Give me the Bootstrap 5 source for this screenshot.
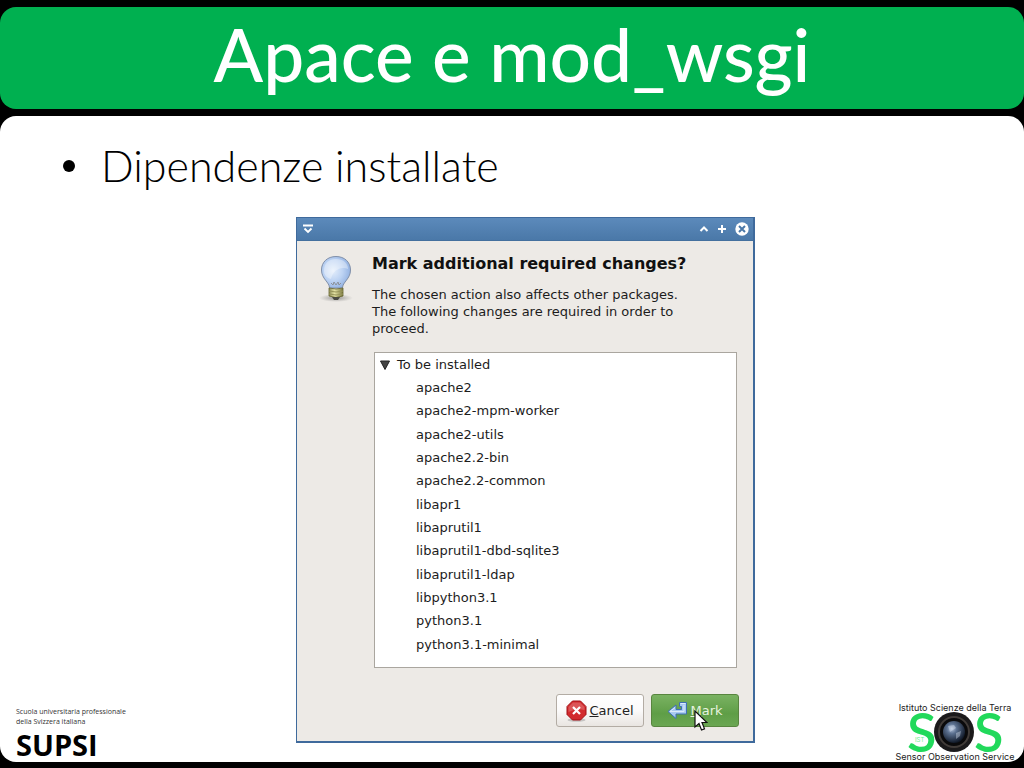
<!DOCTYPE html>
<html lang="it">
<head>
<meta charset="utf-8">
<meta name="viewport" content="width=device-width, initial-scale=1">
<title>Apace e mod_wsgi</title>
<link rel="stylesheet" href="https://cdn.jsdelivr.net/npm/bootstrap@5.3.0/dist/css/bootstrap.min.css">
<style>
  body { background: #000; color: #000; font-family: "Liberation Sans", sans-serif; }
  .slide-title { background: #00b050; border-radius: 16px; margin-top: 7px; height: 102px; }
  .slide-title h1 { color: #fff; font: 500 73px/95px Lato, sans-serif; }
  .slide-body { background: #fff; border-radius: 16px; margin: 7px 0 6px; }
  .points { padding: 21px 60px 0; height: 101px; }
  .points li { font: 300 43px/58px Lato, sans-serif; gap: 26px; }
  .dot { width: 12px; height: 12px; border-radius: 50%; background: #000; margin-left: 3px; }
  .side { flex: 1 1 0; }
  .side-left { padding: 0 0 0 16px; font-family: "Open Sans", sans-serif; }
  .school { font-size: 7px; line-height: 10px; color: #333; }
  .supsi { font-size: 29px; line-height: 35px; font-weight: 700; }
  .side-right { padding-right: 8px; }

  .dialog { width: 459px; margin: 0 0 19px 19px; border: 1px solid #3f6a9c; border-right-width: 2px; border-bottom-width: 2px; background: #edeae6; font: 13px/17px "DejaVu Sans", sans-serif; color: #1c1c1c; }
  .titlebar { height: 23px; background: linear-gradient(#5c8abb, #4a78a8); padding: 0 4px 0 5px; border-bottom: 1px solid #44709e; }
  .titlebar button { border: 0; background: none; padding: 0; line-height: 0; }
  .dialog-main { padding: 14px 16px 0 19px; gap: 16px; }
  .bulb { width: 40px; flex: none; }
  .dialog h2 { font: bold 16px/18px "DejaVu Sans", sans-serif; margin: 0 0 13px; color: #111; }
  .dialog p { margin: 0 0 15px; }
  .tree { background: #fff; border: 1px solid #aaa69f; height: 316px; margin-left: 2px; }
  .tree summary { line-height: 23px; gap: 7px; padding-left: 5px; list-style: none; }
  .tree ul { height: 280px; padding-left: 41px; }
  .actions { padding: 26px 14px 14px; gap: 7px; }
  .act { width: 88px; height: 33px; border-radius: 3px; padding: 0; font: inherit; border: 1px solid #b3aca4; color: #222; background: linear-gradient(#fff, #fbfafa 50%, #e9e5e1); }
  .act-mark { color: #e6f2df; border-color: #58853f; background: linear-gradient(#7ab262, #5f9e47 60%, #6aa652); }
  .act svg { flex: none; }
  .act { gap: 2px; }
  .pointer { left: 42px; top: 15px; }
  .sos { overflow: visible; }
</style>
</head>
<body class="min-vh-100 d-flex flex-column">
<header class="slide-title d-flex justify-content-center">
  <h1 class="m-0 text-nowrap">Apace e mod_wsgi</h1>
</header>
<main class="slide-body flex-grow-1 d-flex flex-column">
  <ul class="points list-unstyled mb-0">
    <li class="d-flex align-items-center"><span class="dot"></span>Dipendenze installate</li>
  </ul>
  <div class="d-flex flex-grow-1">
    <div class="side side-left align-self-end">
      <div class="school">Scuola universitaria professionale<br>della Svizzera italiana</div>
      <div class="supsi">SUPSI</div>
    </div>
    <section class="dialog align-self-end" aria-labelledby="question">
      <div class="titlebar d-flex align-items-center">
        <button type="button" aria-label="Menu" class="me-auto"><svg width="12" height="12" viewBox="0 0 12 12"><path d="M1 2.500h10M2.500 5.500 6 9l3.500-3.500" fill="none" stroke="#fff" stroke-width="1.800"/></svg></button>
        <div class="d-flex align-items-center gap-2">
          <button type="button" aria-label="Minimize"><svg width="10" height="10" viewBox="0 0 10 10"><path d="M1.500 7 5 3.500 8.500 7" fill="none" stroke="#fff" stroke-width="2"/></svg></button>
          <button type="button" aria-label="Maximize"><svg width="10" height="10" viewBox="0 0 10 10"><path d="M1 5h8M5 1v8" stroke="#fff" stroke-width="2"/></svg></button>
          <button type="button" aria-label="Close"><svg width="14" height="14" viewBox="0 0 14 14"><circle cx="7" cy="7" r="6.700" fill="#fff"/><path d="m4 4 6 6M10 4l-6 6" stroke="#4a78a8" stroke-width="2"/></svg></button>
        </div>
      </div>
      <div class="dialog-main d-flex">
        <div class="bulb">
          <svg width="40" height="48" viewBox="0 0 40 48" aria-hidden="true">
            <defs>
              <radialGradient id="glass" cx=".4" cy=".45" r=".6"><stop offset="0" stop-color="#e4eefb"/><stop offset=".55" stop-color="#bdd3f3"/><stop offset="1" stop-color="#93b2e2"/></radialGradient>
              <linearGradient id="brass"><stop offset="0" stop-color="#8b8a55"/><stop offset=".4" stop-color="#e5e3a4"/><stop offset="1" stop-color="#77753f"/></linearGradient>
              <radialGradient id="shade"><stop offset="0" stop-color="#555" stop-opacity=".6"/><stop offset="1" stop-color="#777" stop-opacity="0"/></radialGradient>
            </defs>
            <ellipse cx="20" cy="43" rx="17" ry="4" fill="url(#shade)"/>
            <path d="M13.500 33c0-6-8-9-8-18C5.500 7 11.500 1.500 20 1.500S34.500 7 34.500 15c0 9-8 12-8 18z" fill="url(#glass)" stroke="#8190a9"/>
            <path d="M8 16C8 8 13 4 20 4s12 4 12 10c-7-3-15 1-17 10C11 23 8 20 8 16z" fill="#fff" opacity=".35"/>
            <path d="M15 28l2 2 1-3 2 3 2-3 1 3 2-2" fill="none" stroke="#8c929b" stroke-width="1"/>
            <path d="M13 33q7 2 14 0v8q-7 3-14 0z" fill="url(#brass)" stroke="#66652f" stroke-width=".8"/>
            <path d="M13 36q7 2 14 0M13 39q7 2 14 0" fill="none" stroke="#99965b"/>
            <path d="M16 42h8l-2 3h-4z" fill="#4b4b43"/>
          </svg>
        </div>
        <div class="flex-grow-1">
          <h2 id="question">Mark additional required changes?</h2>
          <p>The chosen action also affects other packages.<br>The following changes are required in order to<br>proceed.</p>
          <details class="tree" open>
            <summary class="d-flex align-items-center"><svg width="10" height="10" viewBox="0 0 10 10"><path d="M.5 1h9L5 9.500z" fill="#444" stroke="#222"/></svg>To be installed</summary>
            <ul class="list-unstyled d-flex flex-column mb-0">
              <li class="flex-fill d-flex align-items-center">apache2</li>
              <li class="flex-fill d-flex align-items-center">apache2-mpm-worker</li>
              <li class="flex-fill d-flex align-items-center">apache2-utils</li>
              <li class="flex-fill d-flex align-items-center">apache2.2-bin</li>
              <li class="flex-fill d-flex align-items-center">apache2.2-common</li>
              <li class="flex-fill d-flex align-items-center">libapr1</li>
              <li class="flex-fill d-flex align-items-center">libaprutil1</li>
              <li class="flex-fill d-flex align-items-center">libaprutil1-dbd-sqlite3</li>
              <li class="flex-fill d-flex align-items-center">libaprutil1-ldap</li>
              <li class="flex-fill d-flex align-items-center">libpython3.1</li>
              <li class="flex-fill d-flex align-items-center">python3.1</li>
              <li class="flex-fill d-flex align-items-center">python3.1-minimal</li>
            </ul>
          </details>
        </div>
      </div>
      <div class="actions d-flex justify-content-end">
        <button type="button" class="act btn d-flex align-items-center justify-content-center">
          <svg width="21" height="22" viewBox="0 0 21 22"><ellipse cx="10.500" cy="20" rx="9" ry="1.800" fill="#999" opacity=".5"/><path d="M6.500 1h8L20 6.500v8L14.500 20h-8L1 14.500v-8z" fill="#d22b2e" stroke="#a10f14"/><path d="M7 2.500h7l4.500 4.500v3q-8-2-16 2V7z" fill="#fff" opacity=".2"/><path d="m7 7 7 7M14 7l-7 7" stroke="#fff" stroke-width="2.200"/></svg>
          <span><u>C</u>ancel</span>
        </button>
        <button type="button" class="act act-mark btn position-relative d-flex align-items-center justify-content-center">
          <svg width="21" height="20" viewBox="0 0 21 20"><path d="M12.500 1.500h7V13H9v4.500L1 10.500 9 4v4.500h5.500v-3h-2z" fill="#a9caf2" stroke="#3f70b4"/><path d="M13.500 2.500h5M8 6.500 3 10.500h14V4" fill="none" stroke="#dcebfc"/></svg>
          <span><u>M</u>ark</span>
          <svg class="pointer position-absolute" width="14" height="22" viewBox="0 0 14 22"><path d="M1 1v16l4-3.500L7.500 20l3-1.200L8 12.500h5z" fill="#fff" stroke="#111" stroke-width="1.200"/></svg>
        </button>
      </div>
    </section>
    <div class="side side-right align-self-end d-flex justify-content-end">
      <svg class="sos" width="120" height="62" viewBox="0 0 120 62" font-family="Inter, sans-serif" role="img" aria-label="Istituto Scienze della Terra SOS Sensor Observation Service">
        <defs><radialGradient id="lens" cx=".4" cy=".35" r=".65"><stop offset="0" stop-color="#b5c4dc"/><stop offset=".35" stop-color="#5b708f"/><stop offset="1" stop-color="#111a29"/></radialGradient></defs>
        <g fill="#21d95b" font-family="Lato, sans-serif" font-size="54" font-weight="600"><text x="11" y="52">S</text><text x="78" y="52">S</text></g>
        <text x="19" y="42" font-size="6" fill="#6aef8f">IST</text>
        <circle cx="58" cy="32" r="20" fill="#1b1a1b"/><circle cx="58" cy="32" r="15" fill="#0a0a0b" stroke="#413c39" stroke-width="2"/>
        <circle cx="58" cy="32" r="11" fill="url(#lens)"/><path d="m52 26 6-1 2 3-6 4zM60 33l5-2-1 5-4 3z" fill="#dbe5f4" opacity=".4"/>
        <text x="59" y="11" font-size="9" text-anchor="middle" fill="#222">Istituto Scienze della Terra</text>
        <text x="59" y="60" font-size="9" text-anchor="middle" fill="#222">Sensor Observation Service</text>
      </svg>
    </div>
  </div>
</main>
<script src="https://cdn.jsdelivr.net/npm/bootstrap@5.3.0/dist/js/bootstrap.bundle.min.js"></script>
</body>
</html>
